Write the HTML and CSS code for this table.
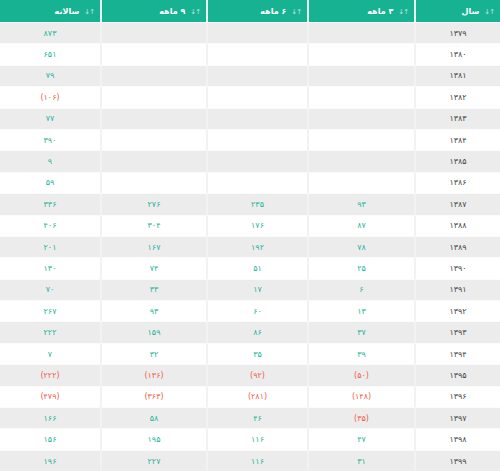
FILE: index.html
```html
<!DOCTYPE html>
<html lang="fa" dir="rtl">
<head>
<meta charset="utf-8">
<link rel="stylesheet" href="styles.css">
</head>
<body>
<table class="grid">
  <colgroup>
    <col class="c-year"><col class="c-q3"><col class="c-q6"><col class="c-q9"><col class="c-yr">
  </colgroup>
  <thead>
    <tr>
      <th><span class="sort">↓↑</span>سال</th>
      <th><span class="sort">↓↑</span>۳ ماهه</th>
      <th><span class="sort">↓↑</span>۶ ماهه</th>
      <th><span class="sort">↓↑</span>۹ ماهه</th>
      <th><span class="sort">↓↑</span>سالانه</th>
    </tr>
  </thead>
  <tbody>
    <tr><td class="y">۱۳۷۹</td><td></td><td></td><td></td><td class="p">۸۷۳</td></tr>
    <tr><td class="y">۱۳۸۰</td><td></td><td></td><td></td><td class="p">۶۵۱</td></tr>
    <tr><td class="y">۱۳۸۱</td><td></td><td></td><td></td><td class="p">۷۹</td></tr>
    <tr><td class="y">۱۳۸۲</td><td></td><td></td><td></td><td class="n">(۱۰۶)</td></tr>
    <tr><td class="y">۱۳۸۳</td><td></td><td></td><td></td><td class="p">۷۷</td></tr>
    <tr><td class="y">۱۳۸۴</td><td></td><td></td><td></td><td class="p">۳۹۰</td></tr>
    <tr><td class="y">۱۳۸۵</td><td></td><td></td><td></td><td class="p">۹</td></tr>
    <tr><td class="y">۱۳۸۶</td><td></td><td></td><td></td><td class="p">۵۹</td></tr>
    <tr><td class="y">۱۳۸۷</td><td class="p">۹۳</td><td class="p">۲۳۵</td><td class="p">۲۷۶</td><td class="p">۳۳۶</td></tr>
    <tr><td class="y">۱۳۸۸</td><td class="p">۸۷</td><td class="p">۱۷۶</td><td class="p">۳۰۴</td><td class="p">۴۰۶</td></tr>
    <tr><td class="y">۱۳۸۹</td><td class="p">۷۸</td><td class="p">۱۹۲</td><td class="p">۱۶۷</td><td class="p">۲۰۱</td></tr>
    <tr><td class="y">۱۳۹۰</td><td class="p">۲۵</td><td class="p">۵۱</td><td class="p">۷۴</td><td class="p">۱۳۰</td></tr>
    <tr><td class="y">۱۳۹۱</td><td class="p">۶</td><td class="p">۱۷</td><td class="p">۳۳</td><td class="p">۷۰</td></tr>
    <tr><td class="y">۱۳۹۲</td><td class="p">۱۳</td><td class="p">۶۰</td><td class="p">۹۳</td><td class="p">۲۶۷</td></tr>
    <tr><td class="y">۱۳۹۳</td><td class="p">۳۷</td><td class="p">۸۶</td><td class="p">۱۵۹</td><td class="p">۲۲۲</td></tr>
    <tr><td class="y">۱۳۹۴</td><td class="p">۳۹</td><td class="p">۳۵</td><td class="p">۳۲</td><td class="p">۷</td></tr>
    <tr><td class="y">۱۳۹۵</td><td class="n">(۵۰)</td><td class="n">(۹۲)</td><td class="n">(۱۳۶)</td><td class="n">(۲۲۲)</td></tr>
    <tr><td class="y">۱۳۹۶</td><td class="n">(۱۴۸)</td><td class="n">(۲۸۱)</td><td class="n">(۳۶۳)</td><td class="n">(۴۷۹)</td></tr>
    <tr><td class="y">۱۳۹۷</td><td class="n">(۳۵)</td><td class="p">۴۶</td><td class="p">۵۸</td><td class="p">۱۶۶</td></tr>
    <tr><td class="y">۱۳۹۸</td><td class="p">۴۷</td><td class="p">۱۱۶</td><td class="p">۱۹۵</td><td class="p">۱۵۶</td></tr>
    <tr><td class="y">۱۳۹۹</td><td class="p">۳۱</td><td class="p">۱۱۶</td><td class="p">۲۲۷</td><td class="p">۱۹۶</td></tr>
  </tbody>
</table>
</body>
</html>
```
FILE: styles.css
```css
html, body {
  margin: 0;
  padding: 0;
  background: #fff;
}
body {
  font-family: "DejaVu Sans", "Noto Sans", sans-serif;
}
.grid {
  width: 500px;
  border-collapse: separate;
  border-spacing: 0;
  table-layout: fixed;
}
.c-year { width: 86px; }
.c-q3 { width: 107px; }
.c-q6 { width: 101px; }
.c-q9 { width: 106px; }
.c-yr { width: 100px; }

.grid th {
  background: #17b292;
  color: #fff;
  font-size: 8px;
  font-weight: bold;
  height: 22px;
  padding: 0 6px 0 4px;
  text-align: right;
  box-sizing: border-box;
  border-left: 2px solid #e9f7f3;
  white-space: nowrap;
}
.grid th:last-child { border-left: 0; }
.sort {
  display: inline-block;
  direction: ltr;
  unicode-bidi: isolate;
  font-size: 7px;
  letter-spacing: -1px;
  opacity: .7;
  margin-left: 5px;
  font-weight: normal;
}
.grid td {
  height: 21.4px;
  padding: 0;
  box-sizing: border-box;
  text-align: center;
  font-size: 8px;
  border-left: 2px solid #f2f2f2;
  border-top: 1px solid #fbfbfb;
}
.grid td:last-child { border-left: 0; }
.grid tbody tr:nth-child(odd) td { background: #ececec; }
.grid td.y { color: #444; }
.grid td.p { color: #1fb598; }
.grid td.n { color: #f0604a; }
```
